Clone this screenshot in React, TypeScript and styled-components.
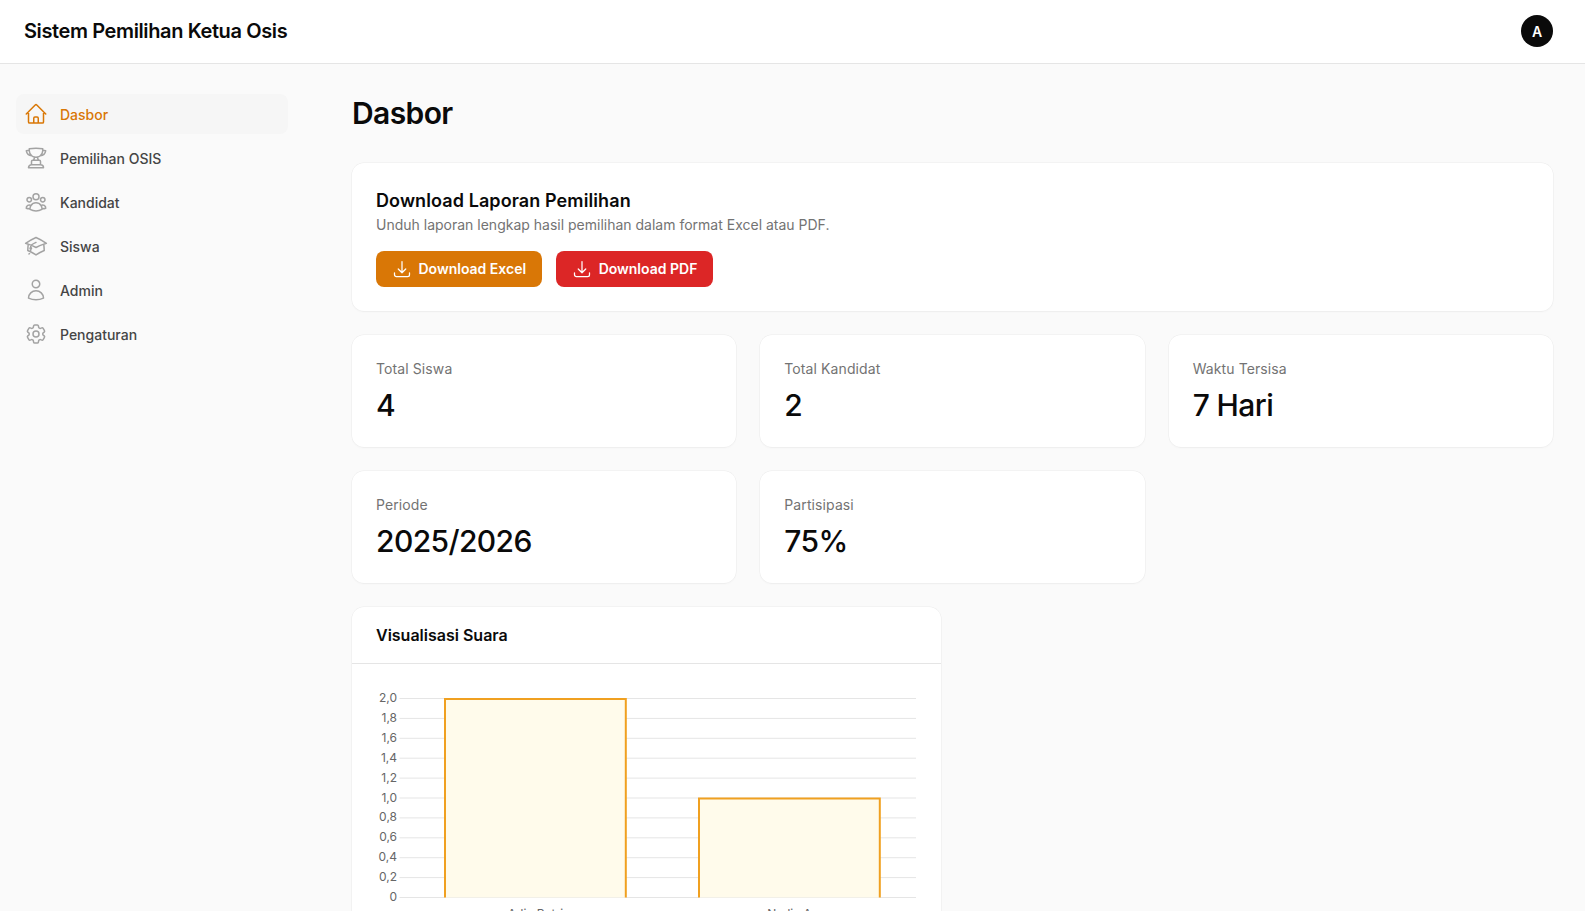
import React from 'react';
import styled, { createGlobalStyle } from 'styled-components';
import {
  HiOutlineAcademicCap,
  HiOutlineArrowDownTray,
  HiOutlineCog6Tooth,
  HiOutlineHome,
  HiOutlineTrophy,
  HiOutlineUser,
  HiOutlineUserGroup
} from 'react-icons/hi2';

const GlobalStyle = createGlobalStyle`
  html, body {
    margin: 0;
    height: 100%;
    overflow: hidden;
  }
  body {
    background: #fafafa;
    color: #0a0a0a;
    font-family: Inter, "Liberation Sans", sans-serif;
  }
  * {
    box-sizing: border-box;
  }
`;

const Header = styled.header`
  height: 64px;
  padding: 0 32px 1px 24px;
  display: flex;
  align-items: center;
  justify-content: space-between;
  background: #fff;
  border-bottom: 1px solid #e5e5e5;
`;

const Brand = styled.div`
  font-size: 20px;
  font-weight: 600;
  letter-spacing: -0.39px;
`;

const Avatar = styled.div`
  width: 32px;
  height: 32px;
  border-radius: 50%;
  background: #0a0a0a;
  color: #fff;
  display: flex;
  align-items: center;
  justify-content: center;
  font-size: 14px;
  font-weight: 600;
`;

const Layout = styled.div`
  display: flex;
`;

const Sidebar = styled.nav`
  width: 320px;
  flex: none;
  padding: 30px 32px 0 16px;
  display: flex;
  flex-direction: column;
  gap: 4px;
`;

const NavItem = styled.a<{ $active?: boolean }>`
  height: 40px;
  padding: 0 8px;
  display: flex;
  align-items: center;
  gap: 12px;
  border-radius: 8px;
  font-size: 14px;
  font-weight: 500;
  color: ${p => (p.$active ? '#d97706' : '#454545')};
  background: ${p => (p.$active ? '#f6f6f6' : 'transparent')};

  svg {
    width: 24px;
    height: 24px;
    flex: none;
    color: ${p => (p.$active ? '#d97706' : '#a3a3a3')};
  }
`;

const Main = styled.main`
  flex: 1;
  min-width: 0;
  padding: 31px 32px 32px 32px;
`;

const Title = styled.h1`
  margin: 0 0 32px;
  height: 36px;
  line-height: 36px;
  font-size: 30px;
  font-weight: 600;
  letter-spacing: -0.6px;
`;

const Card = styled.section`
  background: #fff;
  border-radius: 12px;
  box-shadow: 0 0 0 0.5px #ececec, 0 1px 2px rgba(0, 0, 0, 0.04);
`;

const DownloadCard = styled(Card)`
  padding: 24px;
  margin-bottom: 24px;
`;

const CardHeading = styled.h2`
  margin: 0;
  font-size: 18px;
  line-height: 28px;
  font-weight: 600;
  letter-spacing: 0.1px;
`;

const CardText = styled.p`
  margin: 0 0 16px;
  font-size: 14px;
  line-height: 20px;
  color: #737373;
`;

const Actions = styled.div`
  display: flex;
  gap: 14px;
`;

const DownloadButton = styled.button<{ $tone: string }>`
  height: 36px;
  padding: 0 16px 1px;
  display: flex;
  align-items: center;
  gap: 6.5px;
  border: 0;
  border-radius: 8px;
  background: ${p => p.$tone};
  color: #fff;
  font-family: inherit;
  font-size: 14px;
  font-weight: 600;

  svg {
    width: 20px;
    height: 20px;
    margin-top: 1px;
  }
`;

const StatGrid = styled.div`
  display: grid;
  grid-template-columns: repeat(3, 1fr);
  gap: 24px;
  margin-bottom: 24px;
`;

const StatCard = styled(Card)`
  padding: 24px;
`;

const StatLabel = styled.div`
  font-size: 14px;
  line-height: 20px;
  letter-spacing: 0.1px;
  color: #737373;
`;

const StatValue = styled.div`
  margin-top: 8px;
  font-size: 30px;
  line-height: 36px;
  font-weight: 550;
  letter-spacing: -0.6px;
`;

const ChartGrid = styled.div`
  display: grid;
  grid-template-columns: repeat(2, 1fr);
  gap: 24px;
`;

const ChartHeader = styled.div`
  height: 57px;
  padding: 0 24px;
  display: flex;
  align-items: center;
  font-size: 16px;
  font-weight: 600;
  border-bottom: 1px solid #e5e5e5;
`;

const ChartBody = styled.div`
  padding: 24px;

  svg {
    display: block;
  }

  text {
    font-family: Inter, "Liberation Sans", sans-serif;
    font-size: 12px;
    fill: #666;
  }
`;

const navItems = [
  { label: 'Dasbor', icon: HiOutlineHome, active: true },
  { label: 'Pemilihan OSIS', icon: HiOutlineTrophy },
  { label: 'Kandidat', icon: HiOutlineUserGroup },
  { label: 'Siswa', icon: HiOutlineAcademicCap },
  { label: 'Admin', icon: HiOutlineUser },
  { label: 'Pengaturan', icon: HiOutlineCog6Tooth }
];

const stats = [
  { label: 'Total Siswa', value: '4' },
  { label: 'Total Kandidat', value: '2' },
  { label: 'Waktu Tersisa', value: '7 Hari' },
  { label: 'Periode', value: '2025/2026' },
  { label: 'Partisipasi', value: '75%' }
];

const ticks = ['0', '0,2', '0,4', '0,6', '0,8', '1,0', '1,2', '1,4', '1,6', '1,8', '2,0'];
const bars = [
  { label: 'Adin Putri', value: 2, x: 69 },
  { label: 'Nadia A', value: 1, x: 323 }
];

const PLOT_TOP = 10.5;
const PLOT_BOTTOM = 209.5;
const PLOT_RIGHT = 540;
const BAR_WIDTH = 180.8;

function VoteChart () {
  const yFor = (v: number) => PLOT_BOTTOM - (v / 2) * (PLOT_BOTTOM - PLOT_TOP);

  return (
    <svg width={540.5} height={260} viewBox='0 0 540.5 260'>
      {ticks.map((t, i) => {
        const y = yFor(i * 0.2);

        return (
          <g key={t}>
            <line x1={23.5} x2={PLOT_RIGHT} y1={y} y2={y} stroke='#e5e5e5' />
            <text x={21} y={y + 3.5} textAnchor='end'>{t}</text>
          </g>
        );
      })}
      {bars.map((b) => {
        const top = yFor(b.value) + 0.5;

        return (
          <g key={b.label}>
            <rect x={b.x} y={top} width={BAR_WIDTH} height={PLOT_BOTTOM - top} fill='#fffbeb' />
            <path
              d={`M${b.x} ${PLOT_BOTTOM}V${top}H${b.x + BAR_WIDTH}V${PLOT_BOTTOM}`}
              fill='none'
              stroke='#f0a020'
              strokeWidth={2}
            />
            <text x={b.x + BAR_WIDTH / 2} y={230} textAnchor='middle'>{b.label}</text>
          </g>
        );
      })}
    </svg>
  );
}

export default function App () {
  return (
    <>
      <GlobalStyle />
      <Header>
        <Brand>Sistem Pemilihan Ketua Osis</Brand>
        <Avatar>A</Avatar>
      </Header>
      <Layout>
        <Sidebar>
          {navItems.map(({ active, icon: Icon, label }) => (
            <NavItem key={label} $active={active}>
              <Icon />
              {label}
            </NavItem>
          ))}
        </Sidebar>
        <Main>
          <Title>Dasbor</Title>
          <DownloadCard>
            <CardHeading>Download Laporan Pemilihan</CardHeading>
            <CardText>Unduh laporan lengkap hasil pemilihan dalam format Excel atau PDF.</CardText>
            <Actions>
              <DownloadButton $tone='#d97706'><HiOutlineArrowDownTray />Download Excel</DownloadButton>
              <DownloadButton $tone='#dc2626'><HiOutlineArrowDownTray />Download PDF</DownloadButton>
            </Actions>
          </DownloadCard>
          <StatGrid>
            {stats.map((s) => (
              <StatCard key={s.label}>
                <StatLabel>{s.label}</StatLabel>
                <StatValue>{s.value}</StatValue>
              </StatCard>
            ))}
          </StatGrid>
          <ChartGrid>
            <Card>
              <ChartHeader>Visualisasi Suara</ChartHeader>
              <ChartBody>
                <VoteChart />
              </ChartBody>
            </Card>
          </ChartGrid>
        </Main>
      </Layout>
    </>
  );
}
